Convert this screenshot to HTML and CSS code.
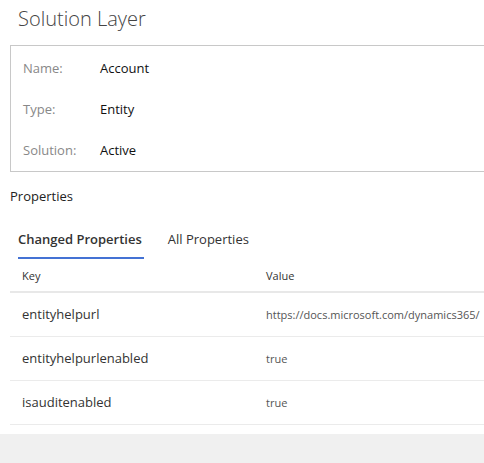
FILE: index.html
```html
<!DOCTYPE html>
<html>
<head>
<meta charset="utf-8">
<link rel="stylesheet" href="styles.css">
</head>
<body>
<div class="page">
  <h1 class="title">Solution Layer</h1>
  <div class="info">
    <div class="info-row"><span class="info-label">Name:</span><span class="info-value">Account</span></div>
    <div class="info-row"><span class="info-label">Type:</span><span class="info-value">Entity</span></div>
    <div class="info-row"><span class="info-label">Solution:</span><span class="info-value">Active</span></div>
  </div>
  <div class="section-title">Properties</div>
  <div class="tabs">
    <div class="tab tab-active">Changed Properties</div>
    <div class="tab">All Properties</div>
  </div>
  <div class="table">
    <div class="thead"><span class="col-key">Key</span><span class="col-value">Value</span></div>
    <div class="trow"><span class="col-key key">entityhelpurl</span><span class="col-value val">https://docs.microsoft.com/dynamics365/</span></div>
    <div class="trow"><span class="col-key key">entityhelpurlenabled</span><span class="col-value val">true</span></div>
    <div class="trow"><span class="col-key key">isauditenabled</span><span class="col-value val">true</span></div>
  </div>
</div>
<div class="footer"></div>
</body>
</html>
```
FILE: styles.css
```css
html, body {
  margin: 0;
  padding: 0;
  height: 100%;
  overflow: hidden;
}
body {
  font-family: "Open Sans", "Noto Sans", sans-serif;
  color: #333;
  background: #f0f0f0;
  display: flex;
  flex-direction: column;
}
.page {
  background: #fff;
  height: 434px;
  flex: none;
  overflow: hidden;
}
.footer {
  flex: 1;
  background: #f0f0f0;
}
.title {
  margin: 0;
  padding: 4px 0 0 18px;
  height: 45px;
  box-sizing: border-box;
  font-size: 20px;
  font-weight: 300;
  color: #444;
  line-height: 30px;
  white-space: nowrap;
}
.info {
  margin-left: 10px;
  border: 1px solid #c8c8c8;
  border-right: none;
  padding: 1px 0 2px;
  height: 127px;
  box-sizing: border-box;
}
.info-row {
  display: flex;
  align-items: center;
  height: 41px;
  padding-left: 12px;
  font-size: 13px;
}
.info-label {
  width: 77px;
  color: #888;
}
.info-value {
  color: #111;
}
.section-title {
  margin: 0 0 0 10px;
  height: 50px;
  display: flex;
  align-items: center;
  font-size: 13px;
  color: #222;
  padding-bottom: 2px;
  box-sizing: border-box;
}
.tabs {
  display: flex;
  gap: 24px;
  padding-left: 18px;
  height: 37px;
  box-sizing: border-box;
  padding-top: 3px;
}
.tab {
  font-size: 13px;
  color: #333;
  height: 34px;
  line-height: 28px;
  box-sizing: border-box;
  white-space: nowrap;
}
.tab-active {
  font-weight: 600;
  border-bottom: 2px solid #4472d4;
  padding-right: 2px;
}
.table {
  margin-left: 10px;
}
.thead {
  display: flex;
  align-items: center;
  height: 34px;
  box-sizing: border-box;
  border-bottom: 2px solid #e8e8e8;
  font-size: 11px;
  color: #333;
}
.trow {
  display: flex;
  align-items: center;
  height: 44px;
  box-sizing: border-box;
  border-bottom: 1px solid #ebebeb;
  padding-bottom: 1px;
}
.col-key {
  width: 256px;
  flex: none;
  padding-left: 12px;
  box-sizing: border-box;
}
.col-value {
  white-space: nowrap;
}
.key {
  font-size: 13px;
  color: #333;
}
.val {
  font-size: 11px;
  color: #555;
}
```
